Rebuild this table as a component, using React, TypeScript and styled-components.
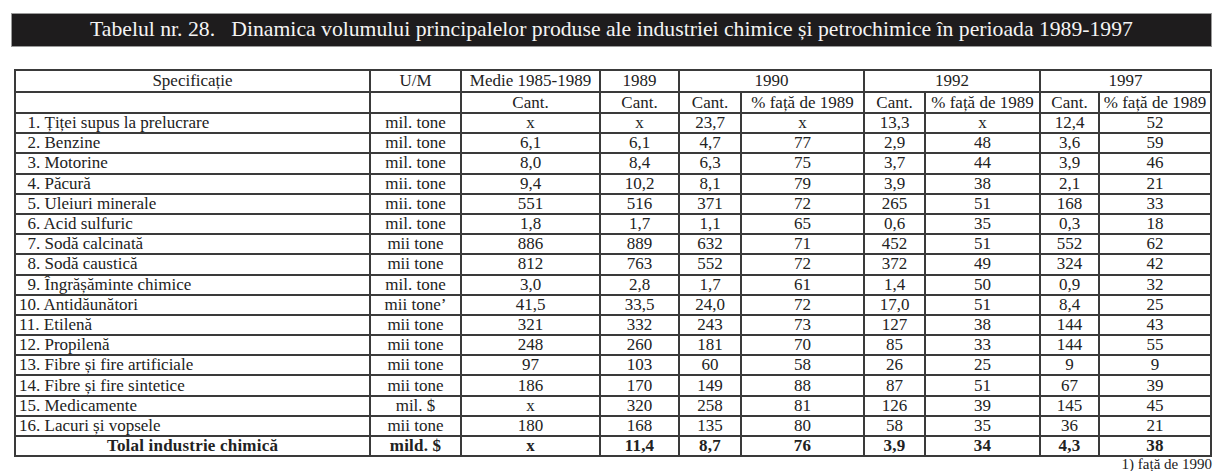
import React from 'react';
import styled, { createGlobalStyle } from 'styled-components';

type Row = {
  name: string;
  unit: string;
  values: string[];
};

const rows: Row[] = [
  { name: '1. Țiței supus la prelucrare', unit: 'mil. tone', values: ['x', 'x', '23,7', 'x', '13,3', 'x', '12,4', '52'] },
  { name: '2. Benzine', unit: 'mil. tone', values: ['6,1', '6,1', '4,7', '77', '2,9', '48', '3,6', '59'] },
  { name: '3. Motorine', unit: 'mil. tone', values: ['8,0', '8,4', '6,3', '75', '3,7', '44', '3,9', '46'] },
  { name: '4. Păcură', unit: 'mii. tone', values: ['9,4', '10,2', '8,1', '79', '3,9', '38', '2,1', '21'] },
  { name: '5. Uleiuri minerale', unit: 'mii. tone', values: ['551', '516', '371', '72', '265', '51', '168', '33'] },
  { name: '6. Acid sulfuric', unit: 'mil. tone', values: ['1,8', '1,7', '1,1', '65', '0,6', '35', '0,3', '18'] },
  { name: '7. Sodă calcinată', unit: 'mii tone', values: ['886', '889', '632', '71', '452', '51', '552', '62'] },
  { name: '8. Sodă caustică', unit: 'mii tone', values: ['812', '763', '552', '72', '372', '49', '324', '42'] },
  { name: '9. Îngrășăminte chimice', unit: 'mil. tone', values: ['3,0', '2,8', '1,7', '61', '1,4', '50', '0,9', '32'] },
  { name: '10. Antidăunători', unit: 'mii tone’', values: ['41,5', '33,5', '24,0', '72', '17,0', '51', '8,4', '25'] },
  { name: '11. Etilenă', unit: 'mii tone', values: ['321', '332', '243', '73', '127', '38', '144', '43'] },
  { name: '12. Propilenă', unit: 'mii tone', values: ['248', '260', '181', '70', '85', '33', '144', '55'] },
  { name: '13. Fibre și fire artificiale', unit: 'mii tone', values: ['97', '103', '60', '58', '26', '25', '9', '9'] },
  { name: '14. Fibre și fire sintetice', unit: 'mii tone', values: ['186', '170', '149', '88', '87', '51', '67', '39'] },
  { name: '15. Medicamente', unit: 'mil. $', values: ['x', '320', '258', '81', '126', '39', '145', '45'] },
  { name: '16. Lacuri și vopsele', unit: 'mii tone', values: ['180', '168', '135', '80', '58', '35', '36', '21'] },
];

const total: Row = {
  name: 'Tolal industrie chimică',
  unit: 'mild. $',
  values: ['x', '11,4', '8,7', '76', '3,9', '34', '4,3', '38'],
};

const colWidths = [355, 91, 139, 79, 62, 123, 61, 115, 59, 112];

const GlobalStyle = createGlobalStyle`
  html, body {
    margin: 0;
    padding: 0;
    background: #fff;
  }
  body {
    font-family: "Liberation Serif", "Times New Roman", serif;
    color: #222;
  }
`;

const Page = styled.div`
  width: 1224px;
  padding: 13px 12px 0 11px;
  box-sizing: border-box;
`;

const TitleBar = styled.div`
  height: 34px;
  box-sizing: border-box;
  background: #1e1c1d;
  border: 1px solid #9a9a9a;
  color: #f4f4f4;
  font-size: 21.7px;
  line-height: 31px;
  text-align: center;
  white-space: pre;
`;

const TableWrap = styled.div`
  padding: 22px 2px 0 3px;
`;

const Table = styled.table`
  width: 100%;
  border-collapse: collapse;
  table-layout: fixed;
  border: 2px solid #3a3a3a;
  font-size: 17px;
`;

const HeadRow = styled.tr<{ $h: number }>`
  height: ${({ $h }) => $h}px;
`;

const BodyRow = styled.tr`
  height: 20.2px;
`;

const Cell = styled.td<{ $left?: boolean; $bold?: boolean }>`
  border: 2px solid #3a3a3a;
  padding: 0 0 0 ${({ $left }) => ($left ? '3px' : '0')};
  line-height: 16px;
  text-align: ${({ $left }) => ($left ? 'left' : 'center')};
  font-weight: ${({ $bold }) => ($bold ? 700 : 400)};
  white-space: nowrap;
  overflow: hidden;
  letter-spacing: ${({ $bold }) => ($bold ? '0.2px' : '0')};
`;

const Footnote = styled.div`
  text-align: right;
  font-size: 15px;
  line-height: 14px;
  color: #222;
`;

const indent = (name: string) => (/^\d\./.test(name) ? '\u2007' + name : name);

export default function App() {
  return (
    <>
      <GlobalStyle />
      <Page>
        <TitleBar>
          {'Tabelul nr. 28.   Dinamica volumului principalelor produse ale industriei chimice și petrochimice în perioada 1989-1997'}
        </TitleBar>
        <TableWrap>
          <Table>
            <colgroup>
              {colWidths.map((w, i) => (
                <col key={i} style={{ width: w }} />
              ))}
            </colgroup>
            <thead>
              <HeadRow $h={22}>
                <Cell as="th">Specificație</Cell>
                <Cell as="th">U/M</Cell>
                <Cell as="th">Medie 1985-1989</Cell>
                <Cell as="th">1989</Cell>
                <Cell as="th" colSpan={2}>1990</Cell>
                <Cell as="th" colSpan={2}>1992</Cell>
                <Cell as="th" colSpan={2}>1997</Cell>
              </HeadRow>
              <HeadRow $h={21}>
                <Cell as="th" />
                <Cell as="th" />
                <Cell as="th">Cant.</Cell>
                <Cell as="th">Cant.</Cell>
                <Cell as="th">Cant.</Cell>
                <Cell as="th">% față de 1989</Cell>
                <Cell as="th">Cant.</Cell>
                <Cell as="th">% față de 1989</Cell>
                <Cell as="th">Cant.</Cell>
                <Cell as="th">% față de 1989</Cell>
              </HeadRow>
            </thead>
            <tbody>
              {rows.map((r) => (
                <BodyRow key={r.name}>
                  <Cell $left>{indent(r.name)}</Cell>
                  <Cell>{r.unit}</Cell>
                  {r.values.map((v, i) => (
                    <Cell key={i}>{v}</Cell>
                  ))}
                </BodyRow>
              ))}
              <BodyRow>
                <Cell $bold>{total.name}</Cell>
                <Cell $bold>{total.unit}</Cell>
                {total.values.map((v, i) => (
                  <Cell key={i} $bold>
                    {v}
                  </Cell>
                ))}
              </BodyRow>
            </tbody>
          </Table>
        </TableWrap>
        <Footnote>1) față de 1990</Footnote>
      </Page>
    </>
  );
}
